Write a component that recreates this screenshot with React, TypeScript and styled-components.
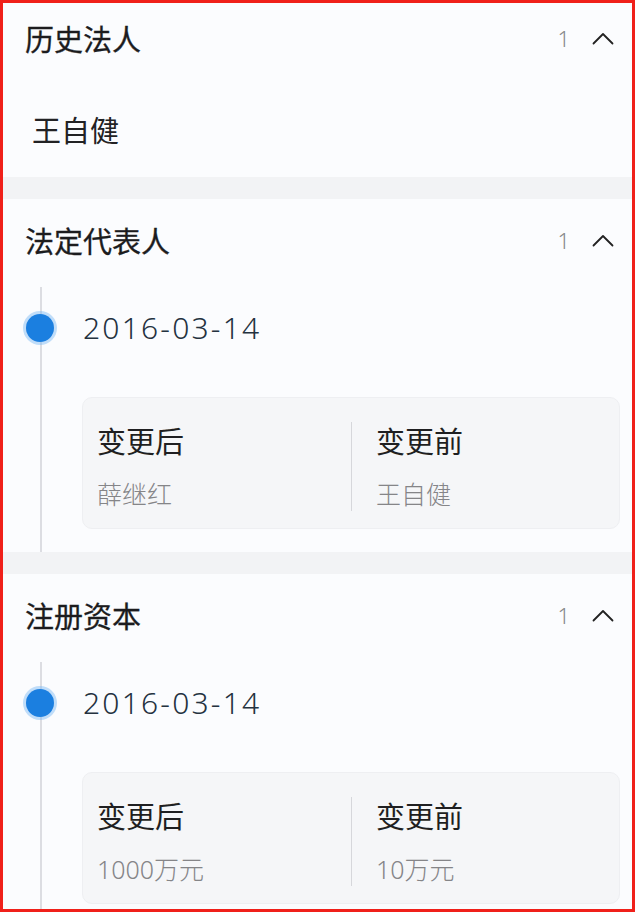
import styled, { createGlobalStyle } from 'styled-components';

const GlobalStyle = createGlobalStyle`
  html, body {
    margin: 0;
    padding: 0;
    background: #ffffff;
  }
  body {
    font-family: "Noto Sans", "Noto Sans CJK SC", sans-serif;
  }
  * {
    box-sizing: border-box;
  }
`;

type ChangeRecord = {
  date: string;
  after: string;
  before: string;
};

type Group = {
  title: string;
  count: number;
  names?: string[];
  records?: ChangeRecord[];
};

const groups: Group[] = [
  { title: '历史法人', count: 1, names: ['王自健'] },
  {
    title: '法定代表人',
    count: 1,
    records: [{ date: '2016-03-14', after: '薛继红', before: '王自健' }],
  },
  {
    title: '注册资本',
    count: 1,
    records: [{ date: '2016-03-14', after: '1000万元', before: '10万元' }],
  },
];

const Frame = styled.div`
  width: 635px;
  height: 912px;
  border: 3px solid #f0201a;
  background: #f2f3f5;
  overflow: hidden;
`;

const List = styled.div`
  margin-top: -6px;
  display: flex;
  flex-direction: column;
  gap: 22px;
`;

const Section = styled.section`
  background: #fbfcfe;
`;

const Header = styled.div`
  height: 88px;
  display: flex;
  align-items: center;
  justify-content: space-between;
  padding: 0 18px 6px 22px;
`;

const Title = styled.h2`
  margin: 0;
  font-family: "Noto Sans CJK SC", sans-serif;
  font-size: 29px;
  font-weight: 400;
  -webkit-text-stroke: 0.3px #1c1c1e;
  line-height: 40px;
  color: #1c1c1e;
`;

const Meta = styled.div`
  display: flex;
  align-items: center;
  gap: 22px;
`;

const Count = styled.span`
  font-family: "Noto Sans", sans-serif;
  font-size: 22px;
  font-weight: 300;
  color: #88888b;
  line-height: 26px;
`;

const NameRow = styled.div`
  height: 92px;
  display: flex;
  align-items: center;
  padding: 0 0 4px 29px;
  font-family: "Noto Sans CJK SC", sans-serif;
  font-size: 29px;
  color: #222224;
`;

const Timeline = styled.div`
  position: relative;
  padding: 0 12px 23px 79px;

  &::before {
    content: '';
    position: absolute;
    left: 37px;
    top: 0;
    bottom: 0;
    width: 1.5px;
    background: #dcdde2;
  }
`;

const DateRow = styled.div`
  position: relative;
  height: 84px;
  display: flex;
  align-items: center;
`;

const Dot = styled.span`
  position: absolute;
  left: -56px;
  top: 50%;
  width: 28px;
  height: 28px;
  margin-top: -15px;
  border-radius: 50%;
  background: #1b7fe0;
  box-shadow: 0 0 0 3px rgba(120, 185, 245, 0.45);
`;

const DateText = styled.span`
  padding: 0 0 2px 1px;
  font-family: "Noto Sans", sans-serif;
  font-size: 30px;
  font-weight: 300;
  letter-spacing: 2.2px;
  color: #24323f;
  line-height: 40px;
`;

const Card = styled.div`
  margin-top: 26px;
  height: 132px;
  display: grid;
  grid-template-columns: 1fr 1fr;
  padding: 24px 0 19px;
  border-radius: 10px;
  background: #f5f6f8;
  border: 1px solid #eeeff2;
`;

const Column = styled.div<{ $divided?: boolean }>`
  display: flex;
  flex-direction: column;
  padding-left: ${({ $divided }) => ($divided ? '24px' : '14px')};
  border-left: ${({ $divided }) => ($divided ? '1px solid #d6d7db' : 'none')};
`;

const Label = styled.div`
  font-family: "Noto Sans CJK SC", sans-serif;
  font-size: 29px;
  line-height: 36px;
  color: #1f1f21;
`;

const Value = styled.div`
  margin-top: 19px;
  font-family: "Noto Sans", "Noto Sans CJK SC", sans-serif;
  font-size: 25px;
  font-weight: 300;
  line-height: 34px;
  color: #858588;
`;

function ChevronUp() {
  return (
    <svg width="22" height="14" viewBox="0 0 22 14" fill="none">
      <polyline
        points="1.5,12.5 11,3 20.5,12.5"
        stroke="#222"
        strokeWidth="1.8"
        strokeLinecap="round"
        strokeLinejoin="round"
      />
    </svg>
  );
}

export default function App() {
  return (
    <>
      <GlobalStyle />
      <Frame>
        <List>
          {groups.map((group) => (
            <Section key={group.title}>
              <Header>
                <Title>{group.title}</Title>
                <Meta>
                  <Count>{group.count}</Count>
                  <ChevronUp />
                </Meta>
              </Header>

              {group.names?.map((name) => (
                <NameRow key={name}>{name}</NameRow>
              ))}

              {group.records && (
                <Timeline>
                  {group.records.map((record) => (
                    <div key={record.date + record.after}>
                      <DateRow>
                        <Dot />
                        <DateText>{record.date}</DateText>
                      </DateRow>
                      <Card>
                        <Column>
                          <Label>变更后</Label>
                          <Value>{record.after}</Value>
                        </Column>
                        <Column $divided>
                          <Label>变更前</Label>
                          <Value>{record.before}</Value>
                        </Column>
                      </Card>
                    </div>
                  ))}
                </Timeline>
              )}
            </Section>
          ))}
        </List>
      </Frame>
    </>
  );
}
